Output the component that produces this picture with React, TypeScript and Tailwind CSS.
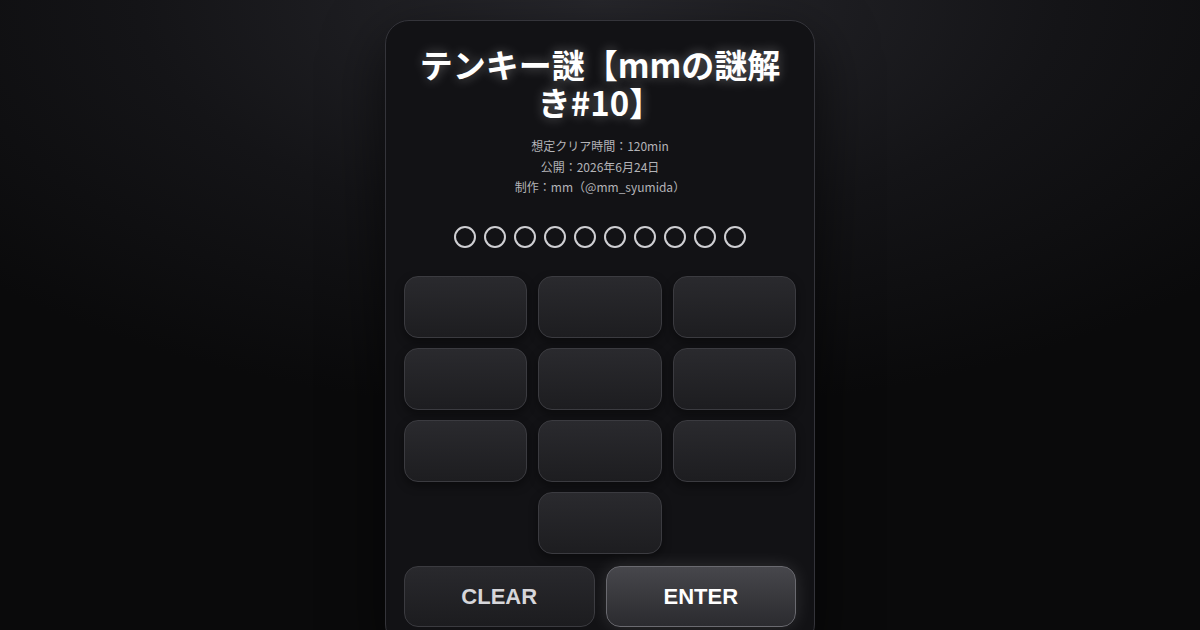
import React from 'react';

const keys = ['', '', '', '', '', '', '', '', ''];

export default function App() {
  const dots = Array.from({ length: 10 });

  return (
    <div
      className="min-h-screen w-full flex justify-center pt-[20px] pb-[40px] bg-[radial-gradient(ellipse_70%_60%_at_50%_0%,#27272c_0%,#141417_55%,#0a0a0b_100%)]"
      style={{ fontFamily: '"Noto Sans CJK JP", "Noto Sans", sans-serif' }}
    >
      <div className="w-[430px] rounded-[24px] border border-[#34343a] bg-[#121215] px-[18px] pt-[24px] pb-[20px] shadow-[0_20px_60px_rgba(0,0,0,0.6)]">
        <h1 className="text-center text-[33px] leading-[38px] font-bold text-white px-[12px] [text-shadow:0_0_12px_rgba(255,255,255,0.35)]">
          テンキー謎【mmの謎解き#10】
        </h1>

        <div className="mt-[15px] text-center text-[12px] leading-[20.5px] text-[#b4b4b8]">
          <p>想定クリア時間：120min</p>
          <p>公開：2026年6月24日</p>
          <p>制作：mm（@mm_syumida）</p>
        </div>

        <div className="mt-[28px] flex justify-center gap-[8px]">
          {dots.map((_, i) => (
            <span
              key={i}
              className="block w-[22px] h-[22px] rounded-full border-[2.5px] border-[#cfcfd3]"
            />
          ))}
        </div>

        <div className="mt-[28px] grid grid-cols-3 gap-x-[11px] gap-y-[10px]">
          {keys.map((k, i) => (
            <button
              key={i}
              className="h-[62px] rounded-[14px] border border-[#3b3b40] bg-gradient-to-b from-[#2a2a2e] to-[#1d1d20] shadow-[0_4px_10px_rgba(0,0,0,0.4)]"
            >
              {k}
            </button>
          ))}
          <div />
          <button className="h-[62px] rounded-[14px] border border-[#3b3b40] bg-gradient-to-b from-[#2a2a2e] to-[#1d1d20] shadow-[0_4px_10px_rgba(0,0,0,0.4)]" />
          <div />
        </div>

        <div
          className="mt-[12px] grid grid-cols-2 gap-[11px]"
          style={{ fontFamily: '"Liberation Sans", Arial, sans-serif' }}
        >
          <button className="h-[61px] rounded-[14px] border border-[#3b3b40] bg-gradient-to-b from-[#29292d] to-[#1c1c1f] text-[22px] font-bold text-[#d6d6da]">
            CLEAR
          </button>
          <button className="h-[61px] rounded-[14px] border border-[#6a6a70] bg-gradient-to-b from-[#47474c] to-[#2b2b2f] text-[22px] font-bold text-white shadow-[0_0_18px_rgba(255,255,255,0.12)]">
            ENTER
          </button>
        </div>
      </div>
    </div>
  );
}
